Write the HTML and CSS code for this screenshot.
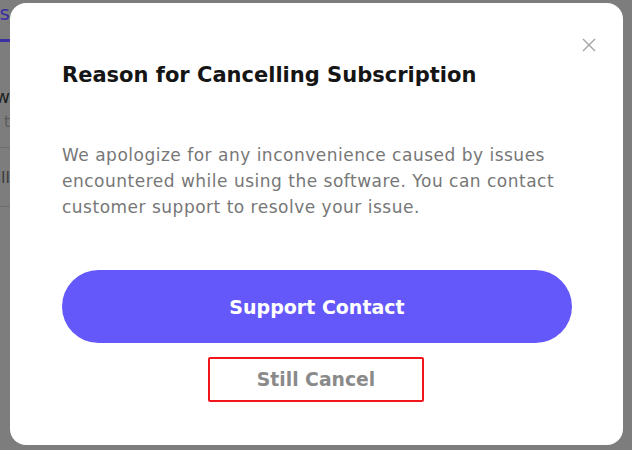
FILE: index.html
```html
<!DOCTYPE html>
<html>
<head>
<meta charset="utf-8">
<link rel="stylesheet" href="styles.css">
</head>
<body>
<div class="page">
  <div class="strip">
    <div class="s-tab">Plans</div>
    <div class="s-bar"></div>
    <div class="s-renew">Renew</div>
    <div class="s-next">Next t</div>
    <div class="s-line"></div>
    <div class="s-bill">Bill</div>
    <div class="s-line s-line2"></div>
  </div>
</div>
<div class="modal">
  <button class="close" aria-label="Close">
    <svg width="14" height="14" viewBox="0 0 14 14"><path d="M1 1L13 13M13 1L1 13" stroke="#a3a3a3" stroke-width="1.4" fill="none"/></svg>
  </button>
  <h2 class="title">Reason for Cancelling Subscription</h2>
  <p class="desc">We apologize for any inconvenience caused by issues encountered while using the software. You can contact customer support to resolve your issue.</p>
  <button class="primary">Support Contact</button>
  <div class="secondary-wrap"><button class="secondary">Still Cancel</button></div>
</div>
</body>
</html>
```
FILE: styles.css
```css
html, body { margin: 0; padding: 0; }
body {
  width: 632px; height: 450px; overflow: hidden;
  background: #7d7d7d;
  font-family: "DejaVu Sans", "Inter", sans-serif;
  position: relative;
}
.page { height: 450px; }
.strip {
  width: 10px; overflow: hidden;
  display: flex; flex-direction: column; align-items: flex-end;
}
.strip > div { white-space: nowrap; }
.s-tab { color: #3b31a3; font-size: 20px; font-weight: 500; margin-top: 1px; line-height: 24px; }
.s-bar { width: 40px; height: 3px; background: #3b31a3; margin-top: 14px; flex: none; }
.s-renew { color: #1f1f1f; font-size: 18px; margin-top: 44px; line-height: 22px; }
.s-next { color: #5a5a5a; font-size: 15px; margin-top: 4px; line-height: 20px; }
.s-line { width: 40px; height: 1px; background: #6e6e6e; margin-top: 15px; flex: none; }
.s-bill { color: #3a3a3a; font-size: 16px; margin-top: 20px; line-height: 20px; }
.s-line2 { margin-top: 18px; }

.modal {
  position: absolute; left: 10px; top: 3px;
  width: 613px; height: 442px; box-sizing: border-box;
  background: #fff; border-radius: 16px;
  padding: 57px 40px 0 52px;
}
.close {
  position: absolute; right: 27px; top: 35px;
  width: 14px; height: 14px; padding: 0; border: 0; background: none;
  display: flex;
}
.title {
  margin: 0; font-size: 21px; font-weight: 700; color: #151515;
  line-height: 30px;
}
.desc {
  margin: 52px 0 0; font-size: 17px; line-height: 26px; color: #777;
  letter-spacing: 0.5px; width: 510px;
}
.primary {
  display: block; width: 510px; height: 73px; margin-top: 50px;
  border: 0; border-radius: 37px; background: #6558fa; color: #fff;
  font-family: inherit; font-size: 19px; font-weight: 700;
}
.secondary-wrap { display: flex; justify-content: center; width: 510px; margin-top: 14px; }
.secondary {
  width: 216px; height: 45px; box-sizing: border-box;
  border: 2px solid #f2161a; border-radius: 2px; background: #fff;
  color: #8a8a8a; font-family: inherit; font-size: 18.8px; font-weight: 700;
  margin-left: -2px;
}
```
